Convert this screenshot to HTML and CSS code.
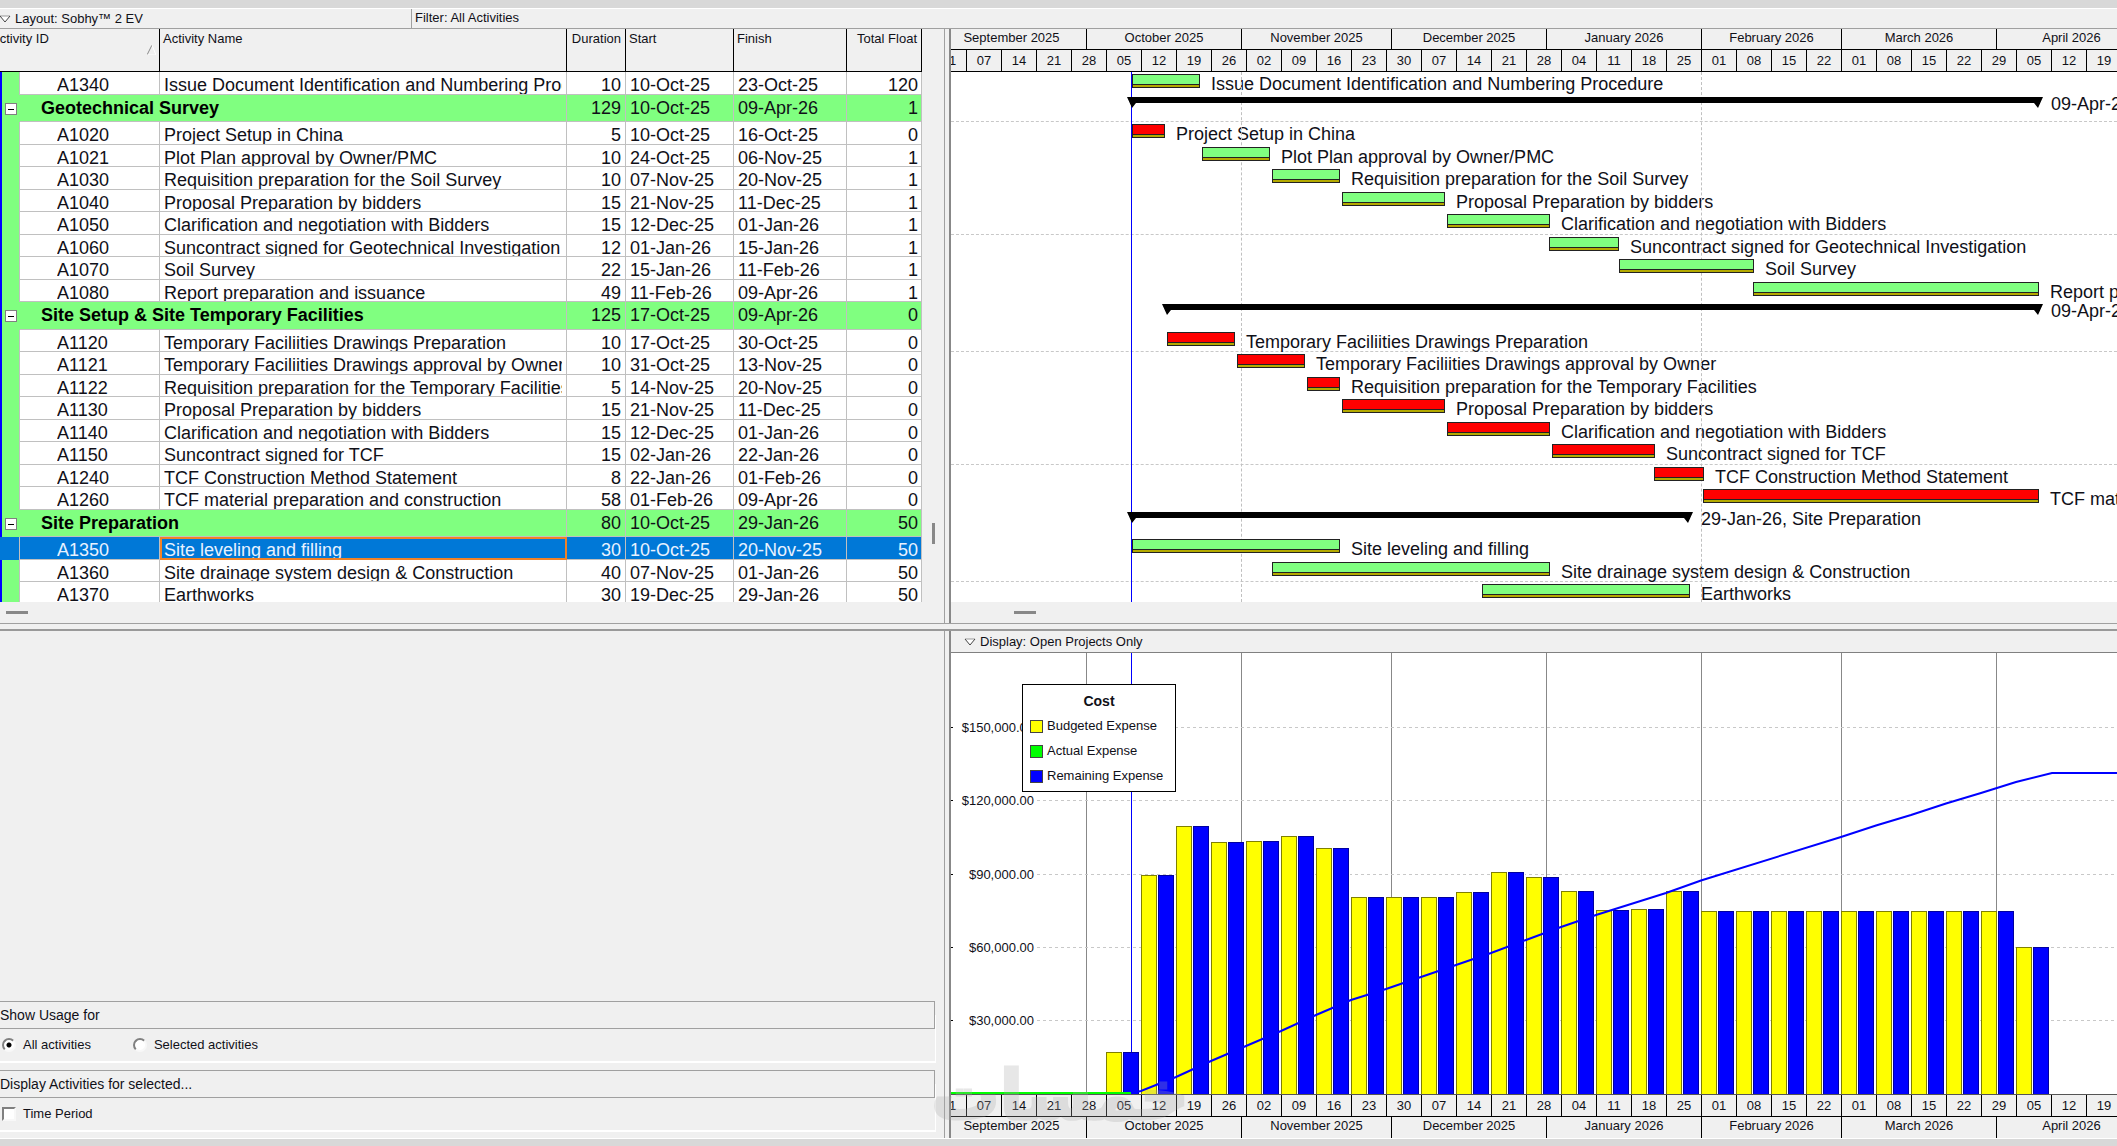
FILE: index.html
```html
<!DOCTYPE html>
<html lang="en">
<head>
<meta charset="utf-8">
<title>Layout: Sobhy™ 2 EV</title>
<link rel="stylesheet" href="styles.css">
</head>
<body>
<header class="layout-bar">
  <button class="layout-name" type="button"><svg class="chevron" viewBox="0 0 12 8"><path d="M11 1 6 7 1 1z" fill="#fff"/><path d="M1 1h10" stroke="#999"/><path d="M1 1l5 6 5-6" fill="none" stroke="#444"/></svg>Layout: Sobhy™ 2 EV</button>
  <div class="filter-name">Filter: All Activities</div>
</header>

<main class="workspace">
  <section class="table-pane">
    <table class="activities">
      <thead>
        <tr><th class="id" colspan="2"><span>Activity ID</span><svg class="sort" viewBox="0 0 9 10"><path d="M0 10 5 0" stroke="#888" fill="none"/><path d="M5 0l4 10H0" stroke="#fff" fill="none"/></svg></th><th>Activity Name</th><th class="num">Duration</th><th>Start</th><th>Finish</th><th class="num">Total Float</th></tr>
      </thead>
      <tbody>
        <tr><td></td><td>A1340</td><td>Issue Document Identification and Numbering Procedure</td><td>10</td><td>10-Oct-25</td><td>23-Oct-25</td><td>120</td></tr>
        <tr class="group"><td><button class="toggle" type="button" aria-label="Collapse"></button></td><td colspan="2">Geotechnical Survey</td><td>129</td><td>10-Oct-25</td><td>09-Apr-26</td><td>1</td></tr>
        <tr><td></td><td>A1020</td><td>Project Setup in China</td><td>5</td><td>10-Oct-25</td><td>16-Oct-25</td><td>0</td></tr>
        <tr><td></td><td>A1021</td><td>Plot Plan approval by Owner/PMC</td><td>10</td><td>24-Oct-25</td><td>06-Nov-25</td><td>1</td></tr>
        <tr><td></td><td>A1030</td><td>Requisition preparation for the Soil Survey</td><td>10</td><td>07-Nov-25</td><td>20-Nov-25</td><td>1</td></tr>
        <tr><td></td><td>A1040</td><td>Proposal Preparation by bidders</td><td>15</td><td>21-Nov-25</td><td>11-Dec-25</td><td>1</td></tr>
        <tr><td></td><td>A1050</td><td>Clarification and negotiation with Bidders</td><td>15</td><td>12-Dec-25</td><td>01-Jan-26</td><td>1</td></tr>
        <tr><td></td><td>A1060</td><td>Suncontract signed for Geotechnical Investigation</td><td>12</td><td>01-Jan-26</td><td>15-Jan-26</td><td>1</td></tr>
        <tr><td></td><td>A1070</td><td>Soil Survey</td><td>22</td><td>15-Jan-26</td><td>11-Feb-26</td><td>1</td></tr>
        <tr><td></td><td>A1080</td><td>Report preparation and issuance</td><td>49</td><td>11-Feb-26</td><td>09-Apr-26</td><td>1</td></tr>
        <tr class="group"><td><button class="toggle" type="button" aria-label="Collapse"></button></td><td colspan="2">Site Setup &amp; Site Temporary Facilities</td><td>125</td><td>17-Oct-25</td><td>09-Apr-26</td><td>0</td></tr>
        <tr><td></td><td>A1120</td><td>Temporary Faciliities Drawings Preparation</td><td>10</td><td>17-Oct-25</td><td>30-Oct-25</td><td>0</td></tr>
        <tr><td></td><td>A1121</td><td>Temporary Faciliities Drawings approval by Owner</td><td>10</td><td>31-Oct-25</td><td>13-Nov-25</td><td>0</td></tr>
        <tr><td></td><td>A1122</td><td>Requisition preparation for the Temporary Facilities</td><td>5</td><td>14-Nov-25</td><td>20-Nov-25</td><td>0</td></tr>
        <tr><td></td><td>A1130</td><td>Proposal Preparation by bidders</td><td>15</td><td>21-Nov-25</td><td>11-Dec-25</td><td>0</td></tr>
        <tr><td></td><td>A1140</td><td>Clarification and negotiation with Bidders</td><td>15</td><td>12-Dec-25</td><td>01-Jan-26</td><td>0</td></tr>
        <tr><td></td><td>A1150</td><td>Suncontract signed for TCF</td><td>15</td><td>02-Jan-26</td><td>22-Jan-26</td><td>0</td></tr>
        <tr><td></td><td>A1240</td><td>TCF Construction Method Statement</td><td>8</td><td>22-Jan-26</td><td>01-Feb-26</td><td>0</td></tr>
        <tr><td></td><td>A1260</td><td>TCF material preparation and construction</td><td>58</td><td>01-Feb-26</td><td>09-Apr-26</td><td>0</td></tr>
        <tr class="group"><td><button class="toggle" type="button" aria-label="Collapse"></button></td><td colspan="2">Site Preparation</td><td>80</td><td>10-Oct-25</td><td>29-Jan-26</td><td>50</td></tr>
        <tr class="selected"><td></td><td>A1350</td><td>Site leveling and filling</td><td>30</td><td>10-Oct-25</td><td>20-Nov-25</td><td>50</td></tr>
        <tr><td></td><td>A1360</td><td>Site drainage system design &amp; Construction</td><td>40</td><td>07-Nov-25</td><td>01-Jan-26</td><td>50</td></tr>
        <tr><td></td><td>A1370</td><td>Earthworks</td><td>30</td><td>19-Dec-25</td><td>29-Jan-26</td><td>50</td></tr>
      </tbody>
    </table>
    <div class="scroll-x"><i></i></div>
    <div class="scroll-y"><i></i></div>
  </section>

  <div class="split-v"></div>

  <section class="gantt-pane">
    <div class="timescale">
      <div class="months"><span style="--d:30">September 2025</span><span style="--d:31">October 2025</span><span style="--d:30">November 2025</span><span style="--d:31">December 2025</span><span style="--d:31">January 2026</span><span style="--d:28">February 2026</span><span style="--d:31">March 2026</span><span style="--d:30">April 2026</span></div>
      <div class="weeks"><span>31</span><span>07</span><span>14</span><span>21</span><span>28</span><span>05</span><span>12</span><span>19</span><span>26</span><span>02</span><span>09</span><span>16</span><span>23</span><span>30</span><span>07</span><span>14</span><span>21</span><span>28</span><span>04</span><span>11</span><span>18</span><span>25</span><span>01</span><span>08</span><span>15</span><span>22</span><span>01</span><span>08</span><span>15</span><span>22</span><span>29</span><span>05</span><span>12</span><span>19</span></div>
    </div>
    <ol class="gantt">
      <li><i class="bar" style="--s:33;--d:14"></i>Issue Document Identification and Numbering Procedure</li>
      <li class="summary"><i class="span" style="--s:33;--d:182"></i>09-Apr-26, Geotechnical Survey</li>
      <li class="critical"><i class="bar" style="--s:33;--d:7"></i>Project Setup in China</li>
      <li><i class="bar" style="--s:47;--d:14"></i>Plot Plan approval by Owner/PMC</li>
      <li><i class="bar" style="--s:61;--d:14"></i>Requisition preparation for the Soil Survey</li>
      <li><i class="bar" style="--s:75;--d:21"></i>Proposal Preparation by bidders</li>
      <li><i class="bar" style="--s:96;--d:21"></i>Clarification and negotiation with Bidders</li>
      <li><i class="bar" style="--s:116.4;--d:14.4"></i>Suncontract signed for Geotechnical Investigation</li>
      <li><i class="bar" style="--s:130.4;--d:27.4"></i>Soil Survey</li>
      <li><i class="bar" style="--s:157.2;--d:57.6"></i>Report preparation and issuance</li>
      <li class="summary"><i class="span" style="--s:40;--d:175"></i>09-Apr-26, Site Setup &amp; Site Temporary Facilities</li>
      <li class="critical"><i class="bar" style="--s:40;--d:14"></i>Temporary Faciliities Drawings Preparation</li>
      <li class="critical"><i class="bar" style="--s:54;--d:14"></i>Temporary Faciliities Drawings approval by Owner</li>
      <li class="critical"><i class="bar" style="--s:68;--d:7"></i>Requisition preparation for the Temporary Facilities</li>
      <li class="critical"><i class="bar" style="--s:75;--d:21"></i>Proposal Preparation by bidders</li>
      <li class="critical"><i class="bar" style="--s:96;--d:21"></i>Clarification and negotiation with Bidders</li>
      <li class="critical"><i class="bar" style="--s:117;--d:21"></i>Suncontract signed for TCF</li>
      <li class="critical"><i class="bar" style="--s:137.4;--d:10.4"></i>TCF Construction Method Statement</li>
      <li class="critical"><i class="bar" style="--s:147.2;--d:67.6"></i>TCF material preparation and construction</li>
      <li class="summary"><i class="span" style="--s:33;--d:112"></i>29-Jan-26, Site Preparation</li>
      <li><i class="bar" style="--s:33;--d:42"></i>Site leveling and filling</li>
      <li><i class="bar" style="--s:61;--d:56"></i>Site drainage system design &amp; Construction</li>
      <li><i class="bar" style="--s:103;--d:42"></i>Earthworks</li>
    </ol>
    <div class="scroll-x"><i></i></div>
    <i class="rule" style="--s:55"></i>
    <i class="rule" style="--s:147"></i>
    <i class="rule data-date" style="--s:33"></i>
  </section>

  <div class="split-h"></div>

  <section class="usage-pane">
    <fieldset>
      <legend>Show Usage for</legend>
      <label><input type="radio" name="usage" checked>All activities</label>
      <label><input type="radio" name="usage">Selected activities</label>
    </fieldset>
    <fieldset>
      <legend>Display Activities for selected...</legend>
      <label><input type="checkbox">Time Period</label>
    </fieldset>
  </section>

  <div class="split-v"></div>

  <section class="chart-pane">
    <button class="display-bar" type="button"><svg class="chevron" viewBox="0 0 12 8"><path d="M11 1 6 7 1 1z" fill="#fff"/><path d="M1 1h10" stroke="#999"/><path d="M1 1l5 6 5-6" fill="none" stroke="#444"/></svg>Display: Open Projects Only</button>
    <div class="plot">
      <svg class="histogram" role="img" aria-label="Cost">
        <g class="months-grid"><path d="M135.5 0v441M290.5 0v441M440.5 0v441M595.5 0v441M750.5 0v441M890.5 0v441M1045.5 0v441"/></g>
        <g class="grid">
          <line x1="86" x2="100%" y1="74.5" y2="74.5"/><line x1="86" x2="100%" y1="147.5" y2="147.5"/><line x1="86" x2="100%" y1="221.5" y2="221.5"/><line x1="86" x2="100%" y1="294.5" y2="294.5"/><line x1="86" x2="100%" y1="367.5" y2="367.5"/>
        </g>
        <path d="M0 74.5h2M0 147.5h2M0 221.5h2M0 294.5h2M0 367.5h2" stroke="#000"/>
        <g class="axis">
          <text x="83" y="79">$150,000.00</text><text x="83" y="152">$120,000.00</text><text x="83" y="226">$90,000.00</text><text x="83" y="299">$60,000.00</text><text x="83" y="372">$30,000.00</text>
        </g>
        <path d="M180.5 0v441" stroke="#00f"/>
        <path class="backing" d="M155 441v-42h34v42zM190 441v-219h34v219zM225 441v-268h34v268zM260 441v-252h34v252zM295 441v-253h34v253zM330 441v-258h34v258zM365 441v-246h34v246zM400 441v-197h34v197zM435 441v-197h34v197zM470 441v-197h34v197zM505 441v-202h34v202zM540 441v-222h34v222zM575 441v-217h34v217zM610 441v-203h34v203zM645 441v-184h34v184zM680 441v-185h34v185zM715 441v-203h34v203zM750 441v-183h34v183zM785 441v-183h34v183zM820 441v-183h34v183zM855 441v-183h34v183zM890 441v-183h34v183zM925 441v-183h34v183zM960 441v-183h34v183zM995 441v-183h34v183zM1030 441v-183h34v183zM1065 441v-147h34v147z"/>
        <path class="budgeted" d="M155.5 442v-42.500h15v43zM190.500 442v-219.500h15v220zM225.500 442v-268.500h15v269zM260.500 442v-252.500h15v253zM295.500 442v-253.500h15v254zM330.500 442v-258.500h15v259zM365.500 442v-246.500h15v247zM400.500 442v-197.500h15v198zM435.500 442v-197.500h15v198zM470.500 442v-197.500h15v198zM505.500 442v-202.500h15v203zM540.500 442v-222.500h15v223zM575.500 442v-217.500h15v218zM610.500 442v-203.500h15v204zM645.500 442v-184.500h15v185zM680.500 442v-185.500h15v186zM715.500 442v-203.500h15v204zM750.500 442v-183.500h15v184zM785.500 442v-183.500h15v184zM820.500 442v-183.500h15v184zM855.500 442v-183.500h15v184zM890.500 442v-183.500h15v184zM925.500 442v-183.500h15v184zM960.500 442v-183.500h15v184zM995.500 442v-183.500h15v184zM1030.500 442v-183.500h15v184zM1065.500 442v-147.500h15v148z"/>
        <path class="remaining" d="M172.5 442v-42.500h15v43zM207.500 442v-219.500h15v220zM242.500 442v-268.500h15v269zM277.500 442v-252.500h15v253zM312.500 442v-253.500h15v254zM347.500 442v-258.500h15v259zM382.500 442v-246.500h15v247zM417.500 442v-197.500h15v198zM452.500 442v-197.500h15v198zM487.500 442v-197.500h15v198zM522.500 442v-202.500h15v203zM557.500 442v-222.500h15v223zM592.500 442v-217.500h15v218zM627.500 442v-203.500h15v204zM662.500 442v-184.500h15v185zM697.500 442v-185.500h15v186zM732.500 442v-203.500h15v204zM767.500 442v-183.500h15v184zM802.500 442v-183.500h15v184zM837.500 442v-183.500h15v184zM872.500 442v-183.500h15v184zM907.500 442v-183.500h15v184zM942.500 442v-183.500h15v184zM977.500 442v-183.500h15v184zM1012.500 442v-183.500h15v184zM1047.500 442v-183.500h15v184zM1082.500 442v-147.500h15v148z"/>
        <path d="M0 440h180" stroke="#0f0" stroke-width="2"/>
        <path class="curve" d="M180 440 190 438 225 424 260 408 295 393 330 378 365 362 400 347 435 336 470 324 505 312 540 300 575 287 610 274 645 262 680 251 715 240 750 227.500 890 184 925 172.500 960 162 995 150.500 1030 140 1065 129 1101 120H3000"/>
      </svg>
      <div class="legend">
        <strong>Cost</strong>
        <span><i class="y"></i>Budgeted Expense</span>
        <span><i class="g"></i>Actual Expense</span>
        <span><i class="b"></i>Remaining Expense</span>
      </div>
    </div>
    <div class="timescale bottom">
      <div class="weeks"><span>31</span><span>07</span><span>14</span><span>21</span><span>28</span><span>05</span><span>12</span><span>19</span><span>26</span><span>02</span><span>09</span><span>16</span><span>23</span><span>30</span><span>07</span><span>14</span><span>21</span><span>28</span><span>04</span><span>11</span><span>18</span><span>25</span><span>01</span><span>08</span><span>15</span><span>22</span><span>01</span><span>08</span><span>15</span><span>22</span><span>29</span><span>05</span><span>12</span><span>19</span></div>
      <div class="months"><span style="--d:30">September 2025</span><span style="--d:31">October 2025</span><span style="--d:30">November 2025</span><span style="--d:31">December 2025</span><span style="--d:31">January 2026</span><span style="--d:28">February 2026</span><span style="--d:31">March 2026</span><span style="--d:30">April 2026</span></div>
    </div>
  </section>
</main>
<div class="watermark" lang="ar" dir="rtl">خمسات</div>
</body>
</html>
```
FILE: styles.css
```css
* { box-sizing: border-box; }

:root {
  --day: 5px;
  --face: #f0f0f0;
  --edge: #a0a0a0;
  --green: #80ff80;
  --line: #c0c0c0;
}

body {
  margin: 0;
  min-height: 100vh;
  display: flex;
  flex-direction: column;
  background: var(--face);
  border-top: 8px solid #d8d8d8;
  color: #101018;
  font: 13px/16px "Liberation Sans", Arial, sans-serif;
  overflow-x: hidden;
}

button {
  border: 0;
  background: none;
  font: inherit;
  color: inherit;
  text-align: left;
}

.chevron { width: 12px; height: 8px; margin-right: 4px; }

/* Layout and filter bar */
.layout-bar {
  display: flex;
  height: 21px;
  border-top: 1px solid #fff;
  border-bottom: 1px solid var(--edge);
}
.layout-name {
  width: 412px;
  padding: 0;
  border-right: 1px solid var(--edge);
}
.layout-name .chevron { margin-left: -1px; }
.filter-name { padding: 1px 3px; }

/* Split panes */
.workspace {
  flex: 1;
  display: grid;
  grid-template-columns: minmax(0, 944fr) 7px minmax(0, 1166fr);
  grid-template-rows: auto 8px 1fr;
  border-bottom: 1px solid #fff;
  box-shadow: 0 7px 0 #d8d8d8, 0 8px 0 #d4e8f6;
  margin-bottom: 8px;
}
.split-v {
  border-left: 1px solid var(--edge);
  border-right: 2px solid #888;
  background: var(--face);
}
.split-h {
  grid-column: 1 / -1;
  border-top: 1px solid var(--edge);
  border-bottom: 2px solid #999;
  background: var(--face);
}

/* Activity table */
.table-pane {
  display: grid;
  grid-template-columns: auto 1fr;
  overflow: hidden;
}
.activities, .activities thead, .activities tbody { display: block; }
.activities tbody { background: #fff; border-right: 1px solid var(--line); }
.activities { width: 922px; }
.activities tr {
  display: grid;
  grid-template-columns: 20px 140px 407px 59px 108px 113px 75px;
}
.activities th {
  height: 43px;
  padding: 2px 3px;
  border-right: 1px solid #000;
  border-bottom: 1px solid #000;
  font-weight: normal;
  text-align: left;
  white-space: nowrap;
}
.activities th.id {
  grid-column: span 2;
  display: flex;
  justify-content: space-between;
  padding-left: 0;
}
.activities .id span { margin-left: -9px; }
.activities .sort { width: 9px; height: 10px; margin-top: 14px; }
.activities th.num { text-align: right; padding-right: 4px; }

.activities tbody tr { grid-template-rows: 100%; overflow: hidden; }
tbody tr, .gantt li { height: 22px; }
tbody tr:nth-child(odd), .gantt li:nth-child(odd) { height: 23px; }
tbody tr.group, .gantt li.summary { height: 27px; }
tbody tr.group:nth-child(odd), .gantt li.summary:nth-child(odd) { height: 28px; }
tbody tr:last-child, .gantt li:last-child { height: 20px; }

.activities td {
  min-height: 0;
  padding: 3px 4px 0;
  overflow: clip;
  overflow-clip-margin: content-box;
  border-right: 1px solid var(--line);
  border-bottom: 1px solid var(--line);
  font-size: 18px;
  line-height: 21px;
  white-space: nowrap;
}
.activities td:first-child {
  padding: 0;
  background: var(--green);
  border-left: 2px solid #00f;
  border-bottom: 0;
}
.activities td:nth-child(2) { padding-left: 37px; }
.activities td:nth-last-child(4), .activities td:last-child { text-align: right; }
.activities td:last-child { border-right: 0; }
.activities tr:last-child td { border-bottom: 0; }

.group td { background: var(--green); }
.group td:first-child { border-right: 0; }
.activities .group td[colspan] { grid-column: span 2; padding-left: 21px; font-weight: bold; color: #000; }

.toggle {
  display: block;
  width: 12px;
  height: 12px;
  margin: 8px 0 0 3px;
  padding: 0 2px;
  border: 1px solid #808080;
  background: linear-gradient(#000, #000) center / 6px 1px no-repeat #fff;
}

.activities .selected td { background: #0078d7; color: #e8f2ff; border-left-color: #0078d7; }
.activities .selected td:nth-child(3) { padding: 1px 2px 0; border: 2px solid #f08228; }

/* Scroll bars */
.scroll-x { grid-column: 1; height: 21px; padding: 9px 6px; }
.scroll-x i { display: block; width: 22px; height: 3px; background: #888; }
.scroll-y { grid-column: 2; grid-row: 1; display: flex; justify-content: center; align-items: flex-end; padding-bottom: 58px; }
.scroll-y i { width: 3px; height: 21px; background: #888; }
.gantt-pane .scroll-x { background: var(--face); padding-left: 63px; position: relative; z-index: 1; }

/* Timescale */
.timescale { overflow: hidden; background: var(--face); }
.months, .weeks { display: flex; text-align: center; }
.months { height: 21px; margin-left: -15px; border-bottom: 1px solid #000; }
.weeks { height: 22px; margin-left: -20px; border-bottom: 1px solid #000; }
.months span {
  flex: 0 0 calc(var(--d) * var(--day));
  padding-top: 1px;
  border-left: 1px solid #000;
}
.weeks span { flex: 0 0 35px; padding-top: 3px; border-left: 1px solid #000; }
.bottom .months { border-bottom: 0; }
.bottom { border-top: 1px solid #555; }

/* Gantt bars */
.gantt-pane { position: relative; background: #fff; overflow: hidden; }
.gantt { margin: 0; padding: 0; list-style: none; }
.gantt li {
  display: flex;
  gap: 11px;
  font-size: 18px;
  line-height: 24px;
  white-space: nowrap;
}
.gantt li:nth-child(5n + 2) { border-bottom: 1px dashed #c8c8c8; }
.bar, .span { position: relative; z-index: 1; }
.bar {
  flex: 0 0 calc(var(--d) * var(--day) - 2px);
  height: 14px;
  margin: 2px 0 0 calc(var(--s) * var(--day) + 16px);
  border: 1px solid #222;
  background: linear-gradient(var(--fill, var(--green)) 9px, #222 9px 10px, #b4aa00 10px);
}
.critical { --fill: #f00; }
.gantt .summary { line-height: 18px; gap: 8px; }
.span {
  flex: 0 0 calc(var(--d) * var(--day) + 6px);
  height: 11px;
  margin: 2px 0 0 calc(var(--s) * var(--day) + 11px);
  background: #000;
  clip-path: polygon(0 0, 100% 0, calc(100% - 5px) 100%, calc(100% - 9px) 6px, 9px 6px, 5px 100%);
}
.rule {
  position: absolute;
  top: 43px;
  bottom: 21px;
  left: calc(var(--s) * var(--day) + 15px);
  border-left: 1px dashed #c0c0c0;
}
.data-date { border-left: 1px solid #00f; }

/* Usage options */
.usage-pane {
  display: flex;
  flex-direction: column;
  justify-content: flex-end;
  gap: 7px;
  padding: 0 8px 6px 0;
}
.usage-pane fieldset {
  display: flex;
  gap: 40px;
  margin: 0;
  padding: 0;
  border: 0;
  border-bottom: 2px solid #fff;
  border-right: 1px solid #fff;
  flex-wrap: wrap;
}
.usage-pane legend {
  width: 100%;
  height: 28px;
  padding: 5px 0 0;
  border: solid var(--edge);
  border-width: 1px 1px 1px 0;
  font-size: 14px;
}
.usage-pane label { display: flex; align-items: center; height: 32px; }
.usage-pane input {
  appearance: none;
  width: 14px;
  height: 14px;
  margin: 0 7px 0 2px;
  background: #fff;
  border: 2px solid;
  border-color: #808080 #f8f8f8 #f8f8f8 #808080;
}
.usage-pane input[type="radio"] { border-radius: 50%; }
.usage-pane input[type="radio"]:checked { background: radial-gradient(#000 0 2px, #fff 3px); }

/* Cost histogram */
.chart-pane { display: flex; flex-direction: column; overflow: hidden; }
.display-bar {
  height: 22px;
  padding: 0 13px;
  border-bottom: 1px solid #808080;
}
.plot {
  flex: 1;
  position: relative;
  display: flex;
  align-items: flex-end;
  background: #fff;
}
.histogram { display: block; width: 100%; height: 441px; }
.histogram path, .histogram line { shape-rendering: crispEdges; }
.months-grid { stroke: #888; }
.grid { stroke: #c8c8c8; stroke-dasharray: 3 3; }
.axis { text-anchor: end; fill: #101018; }
.backing { fill: #fff; }
.budgeted { fill: #ff0; stroke: #808000; }
.remaining { fill: #00f; stroke: #0000a0; }
.histogram .curve { fill: none; stroke: #00f; stroke-width: 2; shape-rendering: auto; }

.legend {
  position: absolute;
  left: 71px;
  top: 31px;
  width: 154px;
  height: 108px;
  display: flex;
  flex-direction: column;
  gap: 9px;
  padding: 8px 7px;
  border: 1px solid #000;
  background: #fff;
}
.legend strong { text-align: center; font-size: 14px; }
.legend span { display: flex; align-items: center; gap: 4px; white-space: nowrap; }
.legend i { width: 13px; height: 13px; border: 1px solid #444; }
.y { background: #ff0; }
.g { background: #0f0; }
.b { background: #00f; }

.watermark {
  position: fixed;
  left: 44%;
  bottom: 0;
  font: bold 68px/100px "DejaVu Sans", sans-serif;
  color: #aaa;
  -webkit-text-stroke: 3px #aaa;
  opacity: .28;
  pointer-events: none;
}
```
